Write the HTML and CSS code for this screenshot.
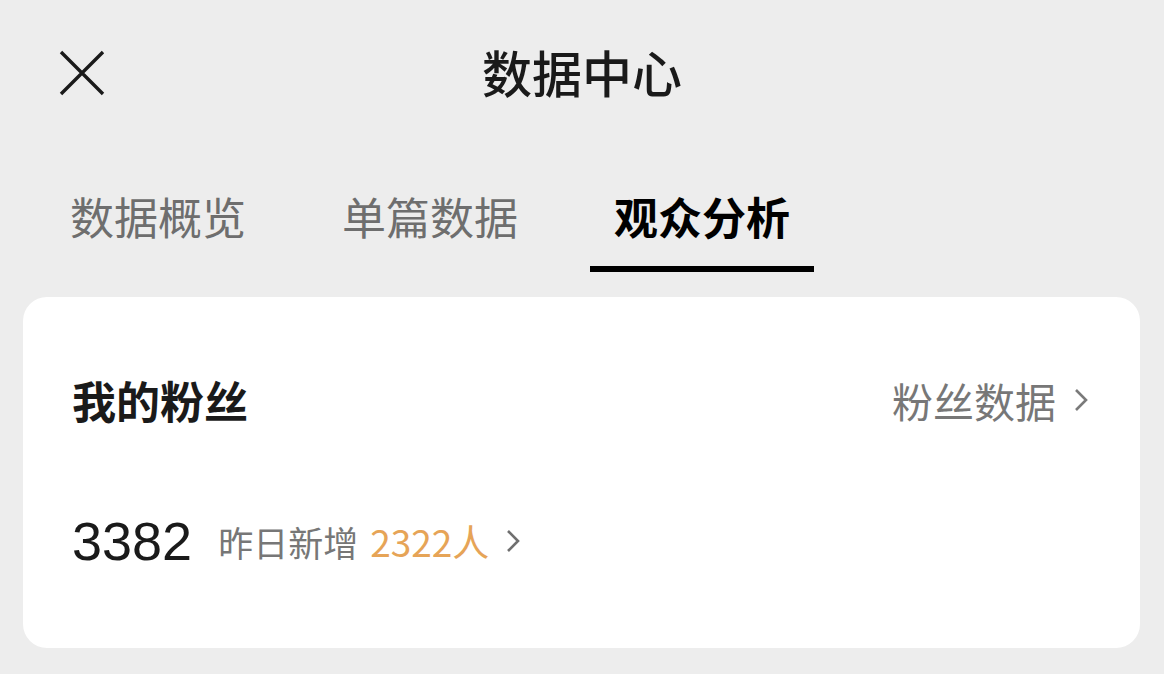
FILE: index.html
```html
<!DOCTYPE html>
<html lang="zh-CN">
<head>
<meta charset="utf-8">
<title>数据中心</title>
<link rel="stylesheet" href="styles.css">
</head>
<body>
  <header class="topbar">
    <button class="close" aria-label="关闭">
      <svg width="48" height="48" viewBox="0 0 48 48"><path d="M3 3 L45 45 M45 3 L3 45" stroke="#1a1a1a" stroke-width="3.4" fill="none" stroke-linecap="butt"/></svg>
    </button>
    <h1 class="title">数据中心</h1>
    <span class="spacer"></span>
  </header>

  <nav class="tabs">
    <a class="tab">数据概览</a>
    <a class="tab">单篇数据</a>
    <a class="tab active">观众分析</a>
  </nav>

  <section class="card">
    <div class="card-head">
      <h2 class="card-title">我的粉丝</h2>
      <a class="more">粉丝数据
        <svg class="chev" width="14" height="24" viewBox="0 0 14 24"><path d="M2 2 L12 12 L2 22" stroke="#7a7a7a" stroke-width="2.6" fill="none"/></svg>
      </a>
    </div>
    <div class="stat">
      <span class="count">3382</span>
      <span class="label">昨日新增</span>
      <span class="delta">2322人</span>
      <svg class="chev" width="14" height="24" viewBox="0 0 14 24"><path d="M2 2 L12 12 L2 22" stroke="#6f6f6f" stroke-width="2.6" fill="none"/></svg>
    </div>
  </section>
</body>
</html>
```

FILE: styles.css
```css
html, body {
  margin: 0;
  padding: 0;
}

body {
  width: 1164px;
  height: 674px;
  overflow: hidden;
  background: #ededed;
  font-family: "Noto Sans CJK SC", "Noto Sans", sans-serif;
  color: #1a1a1a;
}

.topbar {
  height: 150px;
  box-sizing: border-box;
  padding-bottom: 8px;
  display: grid;
  grid-template-columns: 1fr auto 1fr;
  align-items: center;
}

.close {
  justify-self: start;
  margin-left: 58px;
  margin-top: 4px;
  padding: 0;
  border: 0;
  background: none;
  width: 48px;
  height: 48px;
  display: flex;
}

.title {
  margin: 0;
  font-size: 50px;
  font-weight: 500;
  line-height: 60px;
  color: #1a1a1a;
}

.tabs {
  display: flex;
  gap: 48px;
  padding-left: 46px;
}

.tab {
  padding: 38px 24px 22px;
  font-size: 44px;
  line-height: 56px;
  color: #6e6e6e;
  border-bottom: 6px solid transparent;
}

.tab.active {
  color: #000;
  font-weight: 700;
  border-bottom-color: #000;
}

.card {
  margin: 25px 24px 0 23px;
  height: 351px;
  box-sizing: border-box;
  background: #fff;
  border-radius: 24px;
  padding: 75px 52px 0 49px;
}

.card-head {
  display: flex;
  justify-content: space-between;
  align-items: center;
  height: 56px;
}

.card-title {
  margin: 0;
  font-size: 44px;
  font-weight: 700;
  line-height: 56px;
  color: #1a1a1a;
}

.more {
  display: flex;
  align-items: center;
  gap: 18px;
  font-size: 41px;
  line-height: 56px;
  color: #777;
}

.stat {
  margin-top: 83px;
  height: 60px;
  display: flex;
  align-items: center;
}

.count {
  font-family: "Liberation Sans", "Noto Sans", sans-serif;
  font-size: 54px;
  line-height: 60px;
  color: #1a1a1a;
  margin-right: 26px;
}

.label {
  font-size: 35px;
  color: #777;
  margin-right: 12px;
}

.delta {
  font-size: 37px;
  color: #e6a457;
  margin-right: 17px;
}

.chev {
  display: block;
}
```
